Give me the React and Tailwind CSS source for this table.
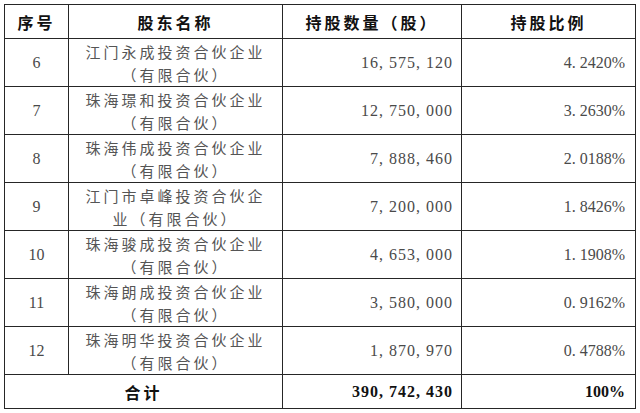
const ROWS = [
  { no: '6', name: ['江门永成投资合伙企业', '（有限合伙）'], shares: '16, 575, 120', ratio: '4. 2420%' },
  { no: '7', name: ['珠海璟和投资合伙企业', '（有限合伙）'], shares: '12, 750, 000', ratio: '3. 2630%' },
  { no: '8', name: ['珠海伟成投资合伙企业', '（有限合伙）'], shares: '7, 888, 460', ratio: '2. 0188%' },
  { no: '9', name: ['江门市卓峰投资合伙企', '业（有限合伙）'], shares: '7, 200, 000', ratio: '1. 8426%' },
  { no: '10', name: ['珠海骏成投资合伙企业', '（有限合伙）'], shares: '4, 653, 000', ratio: '1. 1908%' },
  { no: '11', name: ['珠海朗成投资合伙企业', '（有限合伙）'], shares: '3, 580, 000', ratio: '0. 9162%' },
  { no: '12', name: ['珠海明华投资合伙企业', '（有限合伙）'], shares: '1, 870, 970', ratio: '0. 4788%' },
]

const cjk = "font-['Noto_Sans_CJK_SC',sans-serif]"
const serif = "font-['Liberation_Serif','Noto_Sans_CJK_SC',serif]"
const cell = 'border-[1.5px] border-[#262626] p-0'

export default function App() {
  return (
    <div className="w-[640px] h-[413px] bg-white pt-[4px] pl-[4px] overflow-hidden">
      <table className="border-collapse table-fixed w-[631px]">
        <colgroup>
          <col className="w-[64px]" />
          <col className="w-[214px]" />
          <col className="w-[179px]" />
          <col className="w-[174px]" />
        </colgroup>
        <thead>
          <tr className={`h-[34px] ${cjk} font-bold text-[16px] leading-[20px] text-[#111] tracking-[3px]`}>
            <th className={`${cell} text-center`}>序号</th>
            <th className={`${cell} text-center`}>股东名称</th>
            <th className={`${cell} text-center`}>持股数量（股）</th>
            <th className={`${cell} text-center`}>持股比例</th>
          </tr>
        </thead>
        <tbody>
          {ROWS.map((r) => (
            <tr key={r.no} className="h-[48px]">
              <td className={`${cell} ${serif} text-center text-[16px] leading-[20px] text-[#4a4a4a]`}>{r.no}</td>
              <td className={`${cell} ${cjk} text-center text-[15px] leading-[23px] tracking-[3px] text-[#555]`}>
                {r.name[0]}
                <br />
                {r.name[1]}
              </td>
              <td className={`${cell} ${serif} text-right pr-[8px] text-[16px] leading-[20px] tracking-[1px] text-[#4a4a4a]`}>
                {r.shares}
              </td>
              <td className={`${cell} ${serif} text-right pr-[10px] text-[16px] leading-[20px] text-[#4a4a4a]`}>
                {r.ratio}
              </td>
            </tr>
          ))}
          <tr className="h-[34px] font-bold text-[#111] leading-[20px]">
            <td colSpan={2} className={`${cell} ${cjk} text-center text-[16px] tracking-[3px]`}>
              合计
            </td>
            <td className={`${cell} ${serif} text-right pr-[8px] text-[16px] tracking-[1px]`}>390, 742, 430</td>
            <td className={`${cell} ${serif} text-right pr-[10px] text-[16px]`}>100%</td>
          </tr>
        </tbody>
      </table>
    </div>
  )
}
